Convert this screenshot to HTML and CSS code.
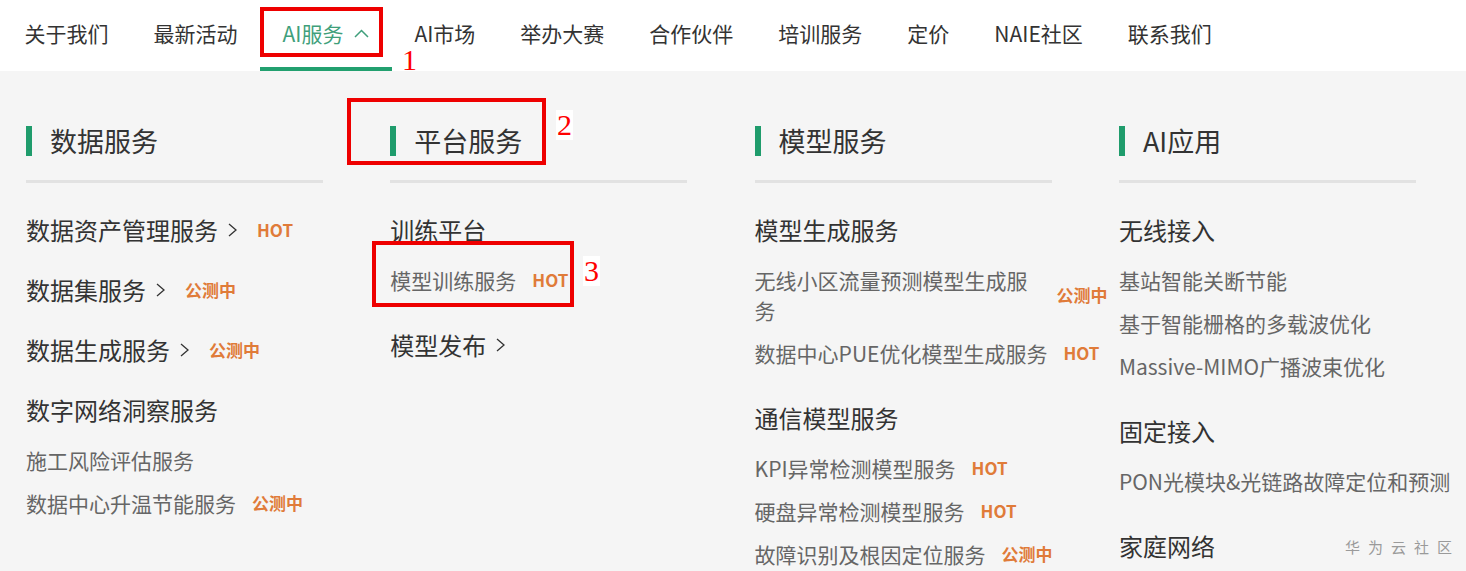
FILE: index.html
```html
<html>
<head>
  <meta charset="UTF-8">
  <meta name="viewport" content="width=device-width, initial-scale=1.0">
  <title>AI服务 - NAIE</title>
  <link rel="stylesheet" href="styles.css">
</head>
<body>
  <nav class="top-nav">
    <a class="nav-item">关于我们</a>
    <a class="nav-item">最新活动</a>
    <a class="nav-item active">AI服务
      <svg class="nav-caret" width="15" height="9" viewBox="0 0 15 9"><polyline points="1,8 7.5,1.5 14,8" fill="none" stroke="currentColor" stroke-width="1.5"/></svg>
    </a>
    <a class="nav-item">AI市场</a>
    <a class="nav-item">举办大赛</a>
    <a class="nav-item">合作伙伴</a>
    <a class="nav-item">培训服务</a>
    <a class="nav-item">定价</a>
    <a class="nav-item">NAIE社区</a>
    <a class="nav-item">联系我们</a>
  </nav>

  <div class="dropdown">
    <!-- 数据服务 -->
    <div class="menu-col">
      <div class="col-head"><h3>数据服务</h3></div>
      <div class="col-list">
        <a class="link">数据资产管理服务<svg class="arrow" width="9" height="14" viewBox="0 0 9 14"><polyline points="1,1 8,7 1,13" fill="none" stroke="currentColor" stroke-width="1.3"/></svg><span class="tag">HOT</span></a>
        <a class="link">数据集服务<svg class="arrow" width="9" height="14" viewBox="0 0 9 14"><polyline points="1,1 8,7 1,13" fill="none" stroke="currentColor" stroke-width="1.3"/></svg><span class="tag">公测中</span></a>
        <a class="link">数据生成服务<svg class="arrow" width="9" height="14" viewBox="0 0 9 14"><polyline points="1,1 8,7 1,13" fill="none" stroke="currentColor" stroke-width="1.3"/></svg><span class="tag">公测中</span></a>
        <div class="group">
          <div class="group-title">数字网络洞察服务</div>
          <a class="sub"><span class="sub-text">施工风险评估服务</span></a>
          <a class="sub"><span class="sub-text">数据中心升温节能服务</span><span class="tag">公测中</span></a>
        </div>
      </div>
    </div>

    <!-- 平台服务 -->
    <div class="menu-col">
      <div class="col-head"><h3>平台服务</h3></div>
      <div class="col-list">
        <div class="group">
          <div class="group-title">训练平台</div>
          <a class="sub"><span class="sub-text">模型训练服务</span><span class="tag">HOT</span></a>
        </div>
        <a class="link">模型发布<svg class="arrow" width="9" height="14" viewBox="0 0 9 14"><polyline points="1,1 8,7 1,13" fill="none" stroke="currentColor" stroke-width="1.3"/></svg></a>
      </div>
    </div>

    <!-- 模型服务 -->
    <div class="menu-col">
      <div class="col-head"><h3>模型服务</h3></div>
      <div class="col-list">
        <div class="group">
          <div class="group-title">模型生成服务</div>
          <a class="sub"><span class="sub-text wrap">无线小区流量预测模型生成服务</span><span class="tag">公测中</span></a>
          <a class="sub"><span class="sub-text">数据中心PUE优化模型生成服务</span><span class="tag">HOT</span></a>
        </div>
        <div class="group">
          <div class="group-title">通信模型服务</div>
          <a class="sub"><span class="sub-text">KPI异常检测模型服务</span><span class="tag">HOT</span></a>
          <a class="sub"><span class="sub-text">硬盘异常检测模型服务</span><span class="tag">HOT</span></a>
          <a class="sub"><span class="sub-text">故障识别及根因定位服务</span><span class="tag">公测中</span></a>
        </div>
      </div>
    </div>

    <!-- AI应用 -->
    <div class="menu-col">
      <div class="col-head"><h3>AI应用</h3></div>
      <div class="col-list">
        <div class="group">
          <div class="group-title">无线接入</div>
          <a class="sub"><span class="sub-text">基站智能关断节能</span></a>
          <a class="sub"><span class="sub-text">基于智能栅格的多载波优化</span></a>
          <a class="sub"><span class="sub-text">Massive-MIMO广播波束优化</span></a>
        </div>
        <div class="group">
          <div class="group-title">固定接入</div>
          <a class="sub"><span class="sub-text">PON光模块&amp;光链路故障定位和预测</span></a>
        </div>
        <div class="group">
          <div class="group-title">家庭网络</div>
        </div>
      </div>
    </div>
  </div>

  <!-- annotations over the screenshot -->
  <div class="mark mark-1"></div>
  <span class="mark-num num-1">1</span>
  <div class="mark mark-2"></div>
  <span class="mark-num num-2">2</span>
  <div class="mark mark-3"></div>
  <span class="mark-num num-3">3</span>

  <div class="watermark">华为云社区</div>
</body>
</html>
```

FILE: styles.css
```css
body {
    margin: 0;
    padding: 0;
    font-family: "Noto Sans CJK SC", "Noto Sans", sans-serif;
    background-color: #f5f5f5;
    color: #333333;
    position: relative;
    height: 571px;
    overflow: hidden;
}

a {
    text-decoration: none;
    color: inherit;
    cursor: pointer;
}

/* Top navigation */
.top-nav {
    display: flex;
    height: 71px;
    padding-left: 2px;
    background-color: #ffffff;
}

.nav-item {
    display: flex;
    align-items: flex-start;
    box-sizing: border-box;
    height: 71px;
    padding: 18px 22.5px 0;
    font-size: 21px;
    line-height: 30px;
    color: #333333;
}

.nav-item.active {
    color: #3f9f7b;
    border-bottom: 4px solid #22a06f;
}

.nav-caret {
    margin: 11px 0 0 11px;
}

/* Dropdown panel */
.dropdown {
    display: grid;
    grid-template-columns: repeat(4, 297px);
    column-gap: 67.3px;
    padding: 55px 0 0 26px;
}

.col-head {
    padding-bottom: 24px;
    border-bottom: 3px solid #e2e2e2;
}

.col-head h3 {
    margin: 0;
    padding-left: 18px;
    border-left: 6px solid #1f9c6c;
    font-size: 27px;
    font-weight: normal;
    line-height: 30px;
    color: #333333;
}

.col-list {
    display: flex;
    flex-direction: column;
    align-items: flex-start;
    padding-top: 32px;
}

.link {
    display: flex;
    align-items: center;
    font-size: 24px;
    line-height: 30px;
    margin-bottom: 30px;
    white-space: nowrap;
    color: #333333;
}

.arrow {
    margin-left: 10px;
}

.link .tag {
    margin-left: 20px;
}

.group {
    display: flex;
    flex-direction: column;
    align-items: flex-start;
    margin-bottom: 22px;
}

.group-title {
    font-size: 24px;
    line-height: 30px;
    margin-bottom: 20px;
    white-space: nowrap;
}

.sub {
    display: flex;
    align-items: center;
    font-size: 21px;
    line-height: 30px;
    margin-bottom: 13px;
    color: #666666;
}

.sub-text {
    white-space: nowrap;
}

.sub-text.wrap {
    white-space: normal;
    width: 282px;
}

.tag {
    margin-left: 16px;
    font-size: 17px;
    font-weight: bold;
    color: #e07b39;
    white-space: nowrap;
}

.sub-text.wrap + .tag {
    margin-left: 20px;
}

/* Red annotation boxes */
.mark {
    position: absolute;
    border: 4px solid #ee0000;
    box-sizing: border-box;
}

.mark-1 { left: 260px; top: 7px; width: 123px; height: 50px; }
.mark-2 { left: 347px; top: 98px; width: 199px; height: 67px; }
.mark-3 { left: 372px; top: 241px; width: 202px; height: 66px; }

.mark-num {
    position: absolute;
    background-color: #ffffff;
    color: #ff0000;
    font-family: "Liberation Serif", serif;
    font-size: 30px;
    line-height: 30px;
    padding: 0 1px;
}

.num-1 { left: 401px; top: 45px; background-color: transparent; }
.num-2 { left: 556px; top: 110px; }
.num-3 { left: 583px; top: 256px; }

.watermark {
    position: absolute;
    right: 6px;
    bottom: 14px;
    font-size: 15px;
    letter-spacing: 8px;
    color: #9a9a9a;
}
```
